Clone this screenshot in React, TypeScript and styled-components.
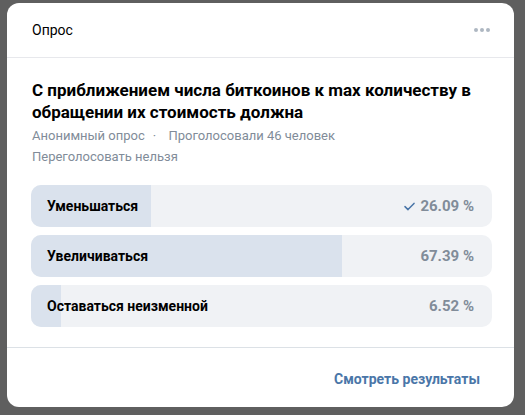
import React from 'react';
import styled, { createGlobalStyle } from 'styled-components';

const GlobalStyle = createGlobalStyle`
    html, body {
        margin:0;
        padding:0;
        background-color:#5f5f5f;
        font-family:Roboto, "Noto Sans", Arial, sans-serif;
        -webkit-font-smoothing:antialiased;
    }
    * { box-sizing:border-box; }
`

const Backdrop = styled.div`
    width:525px;
    height:415px;
    padding:3px 11px 8px 7px;
    background-color:#5f5f5f;
`

const Modal = styled.section`
    display:flex;
    flex-direction:column;
    width:507px;
    height:404px;
    border-radius:12px;
    background-color:#fff;
    overflow:hidden;
`

const Header = styled.header`
    display:flex;
    align-items:center;
    justify-content:space-between;
    height:55px;
    padding:0 24px 0 25px;
    border-bottom:1px solid #e7e8ec;
    font-size:14px;
    color:#000;
`

const MoreButton = styled.button`
    display:flex;
    gap:2px;
    padding:4px 0;
    border:0;
    background:none;
    span {
        width:4px;
        height:4px;
        border-radius:50%;
        background-color:#aeb7c2;
    }
`

const Body = styled.div`
    padding:21px 22px 20px 24px;
    border-bottom:1px solid #dce1e6;
`

const Title = styled.h2`
    margin:0 0 0 1px;
    font-size:17px;
    font-weight:700;
    line-height:22px;
    color:#000;
`

const Meta = styled.p`
    margin:2px 0 0 1px;
    font-size:13px;
    line-height:21px;
    color:#818c99;
    .dot {
        margin:0 9px 0 8px;
    }
`

const Options = styled.div`
    display:flex;
    flex-direction:column;
    gap:8px;
    margin-top:18px;
`

const Option = styled.div`
    position:relative;
    display:flex;
    align-items:center;
    justify-content:space-between;
    height:42px;
    padding:0 18px 0 16px;
    border-radius:10px;
    background-color:#f0f2f5;
    overflow:hidden;
`

const Fill = styled.div`
    position:absolute;
    top:0;
    left:0;
    bottom:0;
    background-color:#dae2ed;
`

const Label = styled.span`
    position:relative;
    font-size:14px;
    font-weight:700;
    color:#000;
`

const Percent = styled.span`
    position:relative;
    display:flex;
    align-items:center;
    gap:5px;
    font-size:15px;
    font-weight:700;
    color:#818c99;
`

const Footer = styled.footer`
    display:flex;
    flex:1;
    align-items:center;
    justify-content:flex-end;
    padding:2px 34px 0 0;
`

const ResultsLink = styled.a`
    font-size:14px;
    font-weight:700;
    color:#4a76a8;
    text-decoration:none;
    cursor:pointer;
`

const options = [
    { label: 'Уменьшаться', percent: 26.09, voted: true },
    { label: 'Увеличиваться', percent: 67.39, voted: false },
    { label: 'Оставаться неизменной', percent: 6.52, voted: false },
]

const App: React.FC = () => {
    return (
        <>
            <GlobalStyle />
            <Backdrop>
                <Modal>
                    <Header>
                        <span>Опрос</span>
                        <MoreButton type="button" aria-label="Ещё"><span></span><span></span><span></span></MoreButton>
                    </Header>
                    <Body>
                        <Title>С приближением числа биткоинов к max количеству в обращении их стоимость должна</Title>
                        <Meta>
                            Анонимный опрос<span className="dot">·</span> Проголосовали 46 человек<br />
                            Переголосовать нельзя
                        </Meta>
                        <Options>
                            {options.map((o) => (
                                <Option key={o.label}>
                                    <Fill style={{ width: `${o.percent}%` }} />
                                    <Label>{o.label}</Label>
                                    <Percent>
                                        {o.voted && (
                                            <svg width="11" height="9" viewBox="0 0 11 9" fill="none">
                                                <path d="M1 4.6l3 3L10 1.4" stroke="#4a76a8" strokeWidth="1.5" strokeLinecap="round" strokeLinejoin="round" />
                                            </svg>
                                        )}
                                        {o.percent} %
                                    </Percent>
                                </Option>
                            ))}
                        </Options>
                    </Body>
                    <Footer>
                        <ResultsLink>Смотреть результаты</ResultsLink>
                    </Footer>
                </Modal>
            </Backdrop>
        </>
    )
}

export default App;
